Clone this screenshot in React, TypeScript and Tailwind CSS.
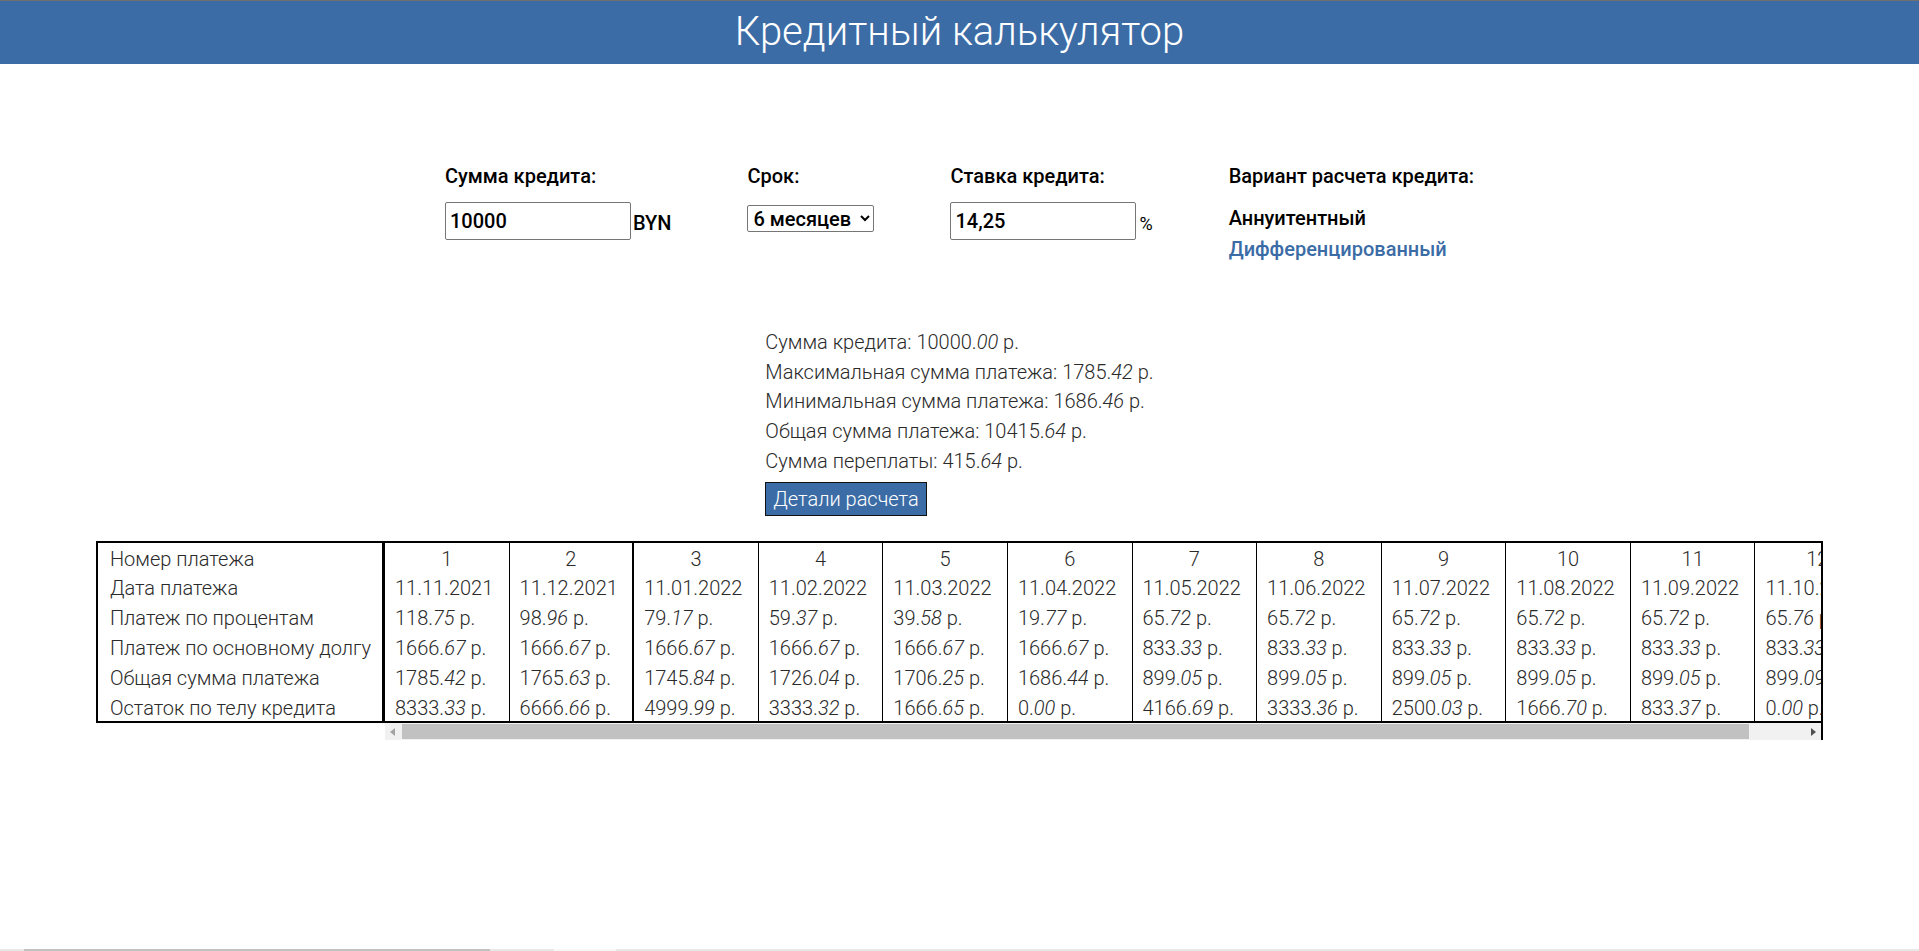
import React from "react";

type Row = { n: number; d: string; p: string; b: string; t: string; r: string };

const rows: Row[] = [
  { n: 1, d: "11.11.2021", p: "118.75", b: "1666.67", t: "1785.42", r: "8333.33" },
  { n: 2, d: "11.12.2021", p: "98.96", b: "1666.67", t: "1765.63", r: "6666.66" },
  { n: 3, d: "11.01.2022", p: "79.17", b: "1666.67", t: "1745.84", r: "4999.99" },
  { n: 4, d: "11.02.2022", p: "59.37", b: "1666.67", t: "1726.04", r: "3333.32" },
  { n: 5, d: "11.03.2022", p: "39.58", b: "1666.67", t: "1706.25", r: "1666.65" },
  { n: 6, d: "11.04.2022", p: "19.77", b: "1666.67", t: "1686.44", r: "0.00" },
  { n: 7, d: "11.05.2022", p: "65.72", b: "833.33", t: "899.05", r: "4166.69" },
  { n: 8, d: "11.06.2022", p: "65.72", b: "833.33", t: "899.05", r: "3333.36" },
  { n: 9, d: "11.07.2022", p: "65.72", b: "833.33", t: "899.05", r: "2500.03" },
  { n: 10, d: "11.08.2022", p: "65.72", b: "833.33", t: "899.05", r: "1666.70" },
  { n: 11, d: "11.09.2022", p: "65.72", b: "833.33", t: "899.05", r: "833.37" },
  { n: 12, d: "11.10.2022", p: "65.76", b: "833.33", t: "899.09", r: "0.00" },
];

function Money({ v }: { v: string }) {
  const [i, f] = v.split(".");
  return (
    <span>
      {i}.<i>{f}</i> р.
    </span>
  );
}

const labels = [
  "Номер платежа",
  "Дата платежа",
  "Платеж по процентам",
  "Платеж по основному долгу",
  "Общая сумма платежа",
  "Остаток по телу кредита",
];

const cell = "h-[29.8px] pt-[3px] leading-[26.8px] whitespace-nowrap";

export default function App() {
  return (
    <div className="min-h-screen flex flex-col bg-white font-['Roboto','Noto_Sans',sans-serif] overflow-hidden">
      <div className="h-px bg-[#6f6f6f]" />
      <header className="h-[63px] bg-[#3b6ca6] flex items-center justify-center pb-[2px]">
        <h1 className="text-[40px] leading-none font-light text-white">Кредитный калькулятор</h1>
      </header>

      <div className="mt-[100px] flex justify-center gap-[76px] text-[20px] font-medium text-black">
        <div className="flex flex-col">
          <label className="leading-[24px]">Сумма кредита:</label>
          <div className="mt-[14px] flex items-center">
            <input
              defaultValue="10000"
              className="w-[186px] h-[38px] border border-[#767676] rounded-[2px] pl-[4px] text-[20px] font-medium text-black outline-none"
            />
            <span className="ml-[2px] text-[20px] pt-[4px]">BYN</span>
          </div>
        </div>
        <div className="flex flex-col">
          <label className="leading-[24px]">Срок:</label>
          <div className="mt-[16px]">
            <select
              defaultValue="6"
              className="h-[27px] w-[127px] border border-[#767676] rounded-[2px] text-[20px] font-medium text-black bg-white px-[1px]"
            >
              <option value="6">6 месяцев</option>
              <option value="12">12 месяцев</option>
            </select>
          </div>
        </div>
        <div className="flex flex-col">
          <label className="leading-[24px]">Ставка кредита:</label>
          <div className="mt-[14px] flex items-center">
            <input
              defaultValue="14,25"
              className="w-[186px] h-[38px] border border-[#767676] rounded-[2px] pl-[4px] text-[20px] font-medium text-black outline-none"
            />
            <span className="ml-[3px] text-[18px] font-normal pt-[4px]">%</span>
          </div>
        </div>
        <div className="flex flex-col">
          <label className="leading-[24px]">Вариант расчета кредита:</label>
          <span className="mt-[18px] leading-[24px] text-[20px]">Аннуитентный</span>
          <span className="mt-[7px] leading-[24px] text-[20px] text-[#3b6ca6]">Дифференцированный</span>
        </div>
      </div>

      <div className="mt-[67px] flex justify-center">
        <div className="flex flex-col items-start text-[20px] font-light text-[#2a2a2a] leading-[29.7px]">
          <div>Сумма кредита: <Money v="10000.00" /></div>
          <div>Максимальная сумма платежа: <Money v="1785.42" /></div>
          <div>Минимальная сумма платежа: <Money v="1686.46" /></div>
          <div>Общая сумма платежа: <Money v="10415.64" /></div>
          <div>Сумма переплаты: <Money v="415.64" /></div>
          <button className="mt-[5px] h-[34px] px-[7px] bg-[#3b6ca6] border border-[#111] text-white text-[20px] font-light leading-none">
            Детали расчета
          </button>
        </div>
      </div>

      <div className="mt-[25px] mx-auto w-[90%] flex text-[20px] font-light text-[#2a2a2a]">
        <div className="w-[289px] shrink-0 border-2 border-r-[3px] border-black self-start">
          {labels.map((l) => (
            <div key={l} className={cell + " pl-[12px]"}>
              {l}
            </div>
          ))}
        </div>
        <div className="flex-1 min-w-0 flex flex-col border-r-2 border-black">
          <div className="flex overflow-hidden border-y-2 border-black">
            {rows.map((r) => (
              <div
                key={r.n}
                className={
                  "w-[124.6px] shrink-0 border-black " + (r.n === 2 ? "border-r-2" : "border-r")
                }
              >
                <div className={cell + " text-center"}>{r.n}</div>
                <div className={cell + " pl-[10px]"}>{r.d}</div>
                <div className={cell + " pl-[10px]"}><Money v={r.p} /></div>
                <div className={cell + " pl-[10px]"}><Money v={r.b} /></div>
                <div className={cell + " pl-[10px]"}><Money v={r.t} /></div>
                <div className={cell + " pl-[10px]"}><Money v={r.r} /></div>
              </div>
            ))}
          </div>
          <div className="h-[17px] flex bg-[#f1f1f1]">
            <div className="w-[17px] flex items-center justify-center">
              <svg width="6" height="8" viewBox="0 0 6 8"><path d="M5 0 L0 4 L5 8 Z" fill="#a3a3a3" /></svg>
            </div>
            <div className="flex-1 flex items-center pr-[55px]">
              <div className="h-[15px] w-full bg-[#c1c1c1]" />
            </div>
            <div className="w-[17px] flex items-center justify-center">
              <svg width="6" height="8" viewBox="0 0 6 8"><path d="M1 0 L6 4 L1 8 Z" fill="#505050" /></svg>
            </div>
          </div>
        </div>
      </div>

      <div className="mt-auto h-[2px] bg-[#e8e8e8] flex">
        <div className="ml-[24px] w-[466px] bg-[#c1c1c1]" />
        <div className="ml-[64px] w-[62px] bg-[#f7f7f7]" />
      </div>
    </div>
  );
}
